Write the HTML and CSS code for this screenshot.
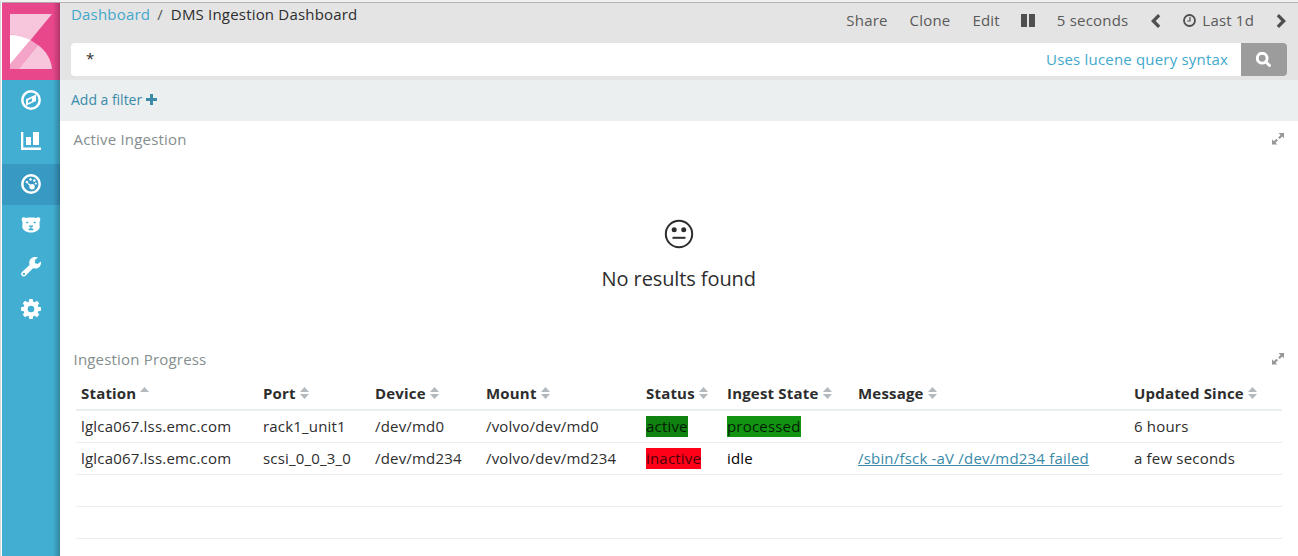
FILE: index.html
```html
<!DOCTYPE html>
<html lang="en">
<head>
<meta charset="utf-8">
<title>DMS Ingestion Dashboard</title>
<link rel="stylesheet" href="styles.css">
</head>
<body>
<svg class="defs" width="0" height="0">
  <symbol id="sort" viewBox="0 0 9 12"><path d="M0 5 4.500 0 9 5ZM0 7h9L4.500 12Z"/></symbol>
  <symbol id="sort-up" viewBox="0 0 9 12"><path d="M0 5 4.500 0 9 5Z"/></symbol>
  <symbol id="expand" viewBox="0 0 12 12"><path d="M6.500 0H12v5.300L10.200 3.600 7.700 6.100 6.200 4.600 8.600 2.100ZM0 6.300 1.900 8.200 4.400 5.700 6 7.200 3.500 9.700 5.300 11.500H0Z"/></symbol>
</svg>
<div class="app">
  <nav class="sidebar">
    <a class="logo"><svg width="42" height="56" viewBox="0 0 42 56">
      <path class="pale" d="M0 0H42L0 51Z"/>
      <path class="mid" d="M0 20.500C8 20.500 14 22.500 21 26.500L0 52Z"/>
      <path class="white" d="M0 21C8 21 14.500 23 20.500 26L0 50Z"/>
      <path class="rose" d="M0 55V51L20.500 26 28 31 8.500 55Z"/>
      <path class="pale" d="M8.500 55 28 31C36 37 41 45 42 55Z"/>
    </svg></a>
    <a class="item"><svg width="20" height="20" viewBox="0 0 20 20">
      <circle class="ring" cx="10" cy="10" r="8.700"/>
      <path class="solid" fill-rule="evenodd" d="M15 4.500V11L5 15.800V9.200ZM10.800 8.300 7 10.600V13.100L11 11.200Z"/>
    </svg></a>
    <a class="item chart"><svg width="20" height="18" viewBox="0 0 20 18">
      <path class="solid" d="M0 0H2.300V15.500H20V18H0ZM5 5H10V13H5ZM12 0H18V13H12Z"/>
    </svg></a>
    <a class="item active"><svg width="20" height="20" viewBox="0 0 20 20">
      <circle class="ring" cx="10" cy="10" r="8.700"/>
      <path class="solid" d="M5 7.500 9.500 10.500C11 9.500 13.500 10 13.800 12.200 14 14.500 12.300 15.800 10.700 15.500 9 15.300 8 13.800 8.500 12Z"/>
      <circle class="solid" cx="9.500" cy="5.500" r="1.300"/><circle class="solid" cx="13.300" cy="6.500" r="1.300"/><circle class="solid" cx="14.800" cy="9.600" r="1.100"/><circle class="solid" cx="5.900" cy="8" r="1.300"/>
    </svg></a>
    <a class="item"><svg width="20" height="16" viewBox="0 0 20 16">
      <path class="solid" d="M.8 1.500C1.500 0 3.500 0 4.800 1 8 .4 12 .4 15.200 1 16.500 0 18.500 0 19.200 1.500 19.500 3 19 4.200 18.500 5L18.700 10.500C17.500 13.800 14 15.500 10 15.500S2.500 13.800 1.300 10.500L1.500 5C1 4 .5 3 .8 1.500Z"/>
      <path class="hole" d="M5.200 4.700h2v1.600h-2ZM12.800 4.700h2v1.600h-2ZM8 8.500h4v1.300l-1.500.5v1l2.400.7-1 1.200H8.100l-1-1.200 2.400-.7v-1L8 9.800Z"/>
    </svg></a>
    <a class="item"><svg width="20" height="20" viewBox="0 0 20 20">
      <path class="solid" fill-rule="evenodd" d="M17 .3 13.900 3.100V6L16.500 7 20 4.500C20.400 8 18.500 11.600 14.800 11.600L12 11.200 4.800 18.500C3.500 19.800 2 19.700.9 18.700-.2 17.500-.1 16.100 1 15L8.600 8C7.200 4 10 0 14 0ZM2.900 15.800a1.100 1.100 0 1 0 .01 0Z"/>
    </svg></a>
    <a class="item"><svg width="20" height="20" viewBox="-10 -10 20 20">
      <g class="solid"><path id="t" d="M-2.500-6-1.700-10h3.400L2.500-6V6L1.700 10h-3.400L-2.500 6Z"/><use href="#t" transform="rotate(45)"/><use href="#t" transform="rotate(90)"/><use href="#t" transform="rotate(135)"/><circle r="7.500"/></g>
      <circle class="hole" r="3.300"/>
    </svg></a>
  </nav>
  <main class="main">
    <header class="header">
      <div class="topline">
        <div class="crumbs"><a>Dashboard</a><i>/</i><span>DMS Ingestion Dashboard</span></div>
        <div class="menu">
          <span class="share">Share</span><span class="clone">Clone</span><span class="edit">Edit</span>
          <svg class="pause" width="14" height="13" viewBox="0 0 14 13"><path d="M0 0h6v13H0ZM8 0h6v13H8Z"/></svg>
          <span class="interval">5 seconds</span>
          <svg class="prev" width="10" height="14" viewBox="0 0 10 14"><path d="M7 0 9.300 2.300 4.700 7 9.300 11.700 7 14 0 7Z"/></svg>
          <svg class="clock" width="13" height="13" viewBox="0 0 13 13"><circle cx="6.500" cy="6.500" r="5.500"/><path d="M7 3v4H4.300"/></svg>
          <span class="range">Last 1d</span>
          <svg class="next" width="10" height="14" viewBox="0 0 10 14"><path d="M3 0 .7 2.300 5.300 7 .7 11.700 3 14 10 7Z"/></svg>
        </div>
      </div>
      <div class="search"><span class="query">*</span><a class="syntax">Uses lucene query syntax</a>
        <button class="go"><svg width="15" height="15" viewBox="0 0 15 15"><circle cx="6.200" cy="6.200" r="4.900"/><path d="M9.700 9.700 13.500 13.500"/></svg></button>
      </div>
    </header>
    <div class="filters"><a>Add a filter</a><svg width="11" height="11" viewBox="0 0 11 11"><path d="M4 0h3v4h4v3H7v4H4V7H0V4h4Z"/></svg></div>
    <section class="panel first">
      <div class="title"><h2>Active Ingestion</h2><svg width="12" height="12"><use href="#expand"/></svg></div>
      <div class="empty">
        <svg width="30" height="30" viewBox="0 0 30 30"><circle class="face" cx="15" cy="15" r="13.200"/><circle cx="10.200" cy="10.700" r="2.500"/><circle cx="19.700" cy="10.700" r="2.500"/><path class="face" d="M8.500 18.800H21.500"/></svg>
        <p>No results found</p>
      </div>
    </section>
    <section class="panel">
      <div class="title"><h2>Ingestion Progress</h2><svg width="12" height="12"><use href="#expand"/></svg></div>
      <table>
        <colgroup><col class="c1"><col class="c2"><col class="c3"><col class="c4"><col class="c5"><col class="c6"><col class="c7"><col></colgroup>
        <thead><tr>
          <th>Station<svg><use href="#sort-up"/></svg></th><th>Port<svg><use href="#sort"/></svg></th><th>Device<svg><use href="#sort"/></svg></th><th>Mount<svg><use href="#sort"/></svg></th><th>Status<svg><use href="#sort"/></svg></th><th>Ingest State<svg><use href="#sort"/></svg></th><th>Message<svg><use href="#sort"/></svg></th><th>Updated Since<svg><use href="#sort"/></svg></th>
        </tr></thead>
        <tbody>
          <tr><td>lglca067.lss.emc.com</td><td>rack1_unit1</td><td>/dev/md0</td><td>/volvo/dev/md0</td><td><mark class="ok">active</mark></td><td><mark class="done">processed</mark></td><td></td><td>6 hours</td></tr>
          <tr><td>lglca067.lss.emc.com</td><td>scsi_0_0_3_0</td><td>/dev/md234</td><td>/volvo/dev/md234</td><td><mark class="bad">inactive</mark></td><td class="idle">idle</td><td><a>/sbin/fsck -aV /dev/md234 failed</a></td><td>a few seconds</td></tr>
          <tr><td colspan="8"></td></tr>
          <tr><td colspan="8"></td></tr>
        </tbody>
      </table>
    </section>
  </main>
</div>
</body>
</html>
```
FILE: styles.css
```css
* { box-sizing: border-box; }
body { margin: 0; background: #fff; color: #2d2d2d; font: 15px/21px "Open Sans", sans-serif; letter-spacing: .19px; overflow: hidden; }
.defs { display: block; }
.app { display: flex; height: 556px; border-top: 2px solid #f1f1f1; border-left: 1px solid #d8d8d8; padding-left: 1px; }
.sidebar { width: 58px; flex: none; background: linear-gradient(90deg, transparent 51px, rgba(0,0,0,.24)), #42afd2; }
.sidebar a { display: flex; justify-content: center; align-items: center; }
.sidebar .logo { height: 78px; border-top: 1px solid #b0a3a9; background: linear-gradient(90deg, transparent 51px, rgba(0,0,0,.24)), #e8478b; }
.sidebar .logo svg { margin: 1px 0 0 0; }
.pale { fill: #f7c5dc; }
.mid { fill: #f3a4c7; }
.rose { fill: #f3a4c7; }
.white { fill: #fff; }
.sidebar .item { height: 42px; padding-bottom: 2px; }
.sidebar .item.chart { padding-bottom: 4px; }
.sidebar .item.active { height: 41px; padding-bottom: 1px; background: linear-gradient(90deg, transparent 51px, rgba(0,0,0,.24)), #3899c2; }
.solid { fill: #fff; }
.ring { fill: none; stroke: #fff; stroke-width: 2.500; }
.hole { fill: #42afd2; }
.main { flex: 1; min-width: 0; }
.header { height: 78px; background: #e4e4e4; border-top: 1px solid #b3b3b3; padding: 0 11px; }
.topline { display: flex; justify-content: space-between; height: 40px; }
.crumbs { padding-top: 1px; }
.crumbs a, .syntax { color: #42a8cc; }
.crumbs i { font-style: normal; margin: 0 8px 0 7px; color: #555; }
.menu { display: flex; align-items: center; height: 35px; color: #5a5a5a; white-space: nowrap; margin-right: 1px; }
.menu svg { fill: #4f4f4f; }
.share, .clone { margin-right: 22px; }
.edit { margin-right: 21px; }
.pause { margin-right: 22px; }
.interval { margin-right: 23px; }
.prev { margin-right: 22px; }
.menu .clock { fill: none; stroke: #4f4f4f; stroke-width: 1.800; margin-right: 6px; }
.clock path { stroke-width: 1.200; }
.range { margin-right: 22px; }
.search { display: flex; align-items: center; height: 33px; background: #fff; border-radius: 4px; }
.query { flex: 1; padding: 0 0 2px 15px; }
.syntax { margin-right: 13px; }
.go { width: 46px; height: 33px; padding: 2px 1px 0 0; border: 0; border-radius: 0 4px 4px 0; background: #9c9c9c; }
.go svg { fill: none; stroke: #fff; stroke-width: 2.900; stroke-linecap: round; }
.filters { display: flex; align-items: center; gap: 4px; height: 41px; padding: 0 0 2px 11px; font-size: 14px; letter-spacing: -.02px; color: #3a8aa8; background: #ebeff0; }
.filters svg { fill: #3a8aa8; }
.panel { padding: 8px 14px 0 13.500px; }
.first { height: 220px; }
.title { display: flex; justify-content: space-between; align-items: center; height: 21px; }
.title h2 { margin: 0; font-size: 15px; font-weight: 400; color: #848e8e; }
.title svg { fill: #969696; margin-bottom: 2px; }
.empty { display: flex; flex-direction: column; align-items: center; padding-top: 69px; }
.empty svg { fill: #2d2d2d; }
.empty .face { fill: none; stroke: #2d2d2d; stroke-width: 2; }
.empty p { margin: 16px 0 0; font-size: 20px; line-height: 28px; letter-spacing: -.1px; }
table { width: 1206px; margin: 7px 0 0 2.500px; border-collapse: separate; border-spacing: 0; table-layout: fixed; }
.c1 { width: 182px; } .c2 { width: 112px; } .c3 { width: 111px; } .c4 { width: 160px; } .c5 { width: 81px; } .c6 { width: 131px; } .c7 { width: 276px; }
th, td { padding: 0 5px; text-align: left; white-space: nowrap; height: 32px; border-bottom: 1px solid #eceeee; }
th { height: 34px; font-weight: 700; border-bottom: 2px solid #e9eeee; }
th svg { width: 9px; height: 12px; margin-left: 4px; fill: #b3b9bc; }
mark { display: inline-block; height: 21px; color: #041c04; }
.ok { background: #108210; }
.done { background: #129412; }
.bad { background: #ff0018; color: #4a0008; }
.idle { color: #000; }
td a { color: #3a8aa8; text-decoration: underline; }
```
